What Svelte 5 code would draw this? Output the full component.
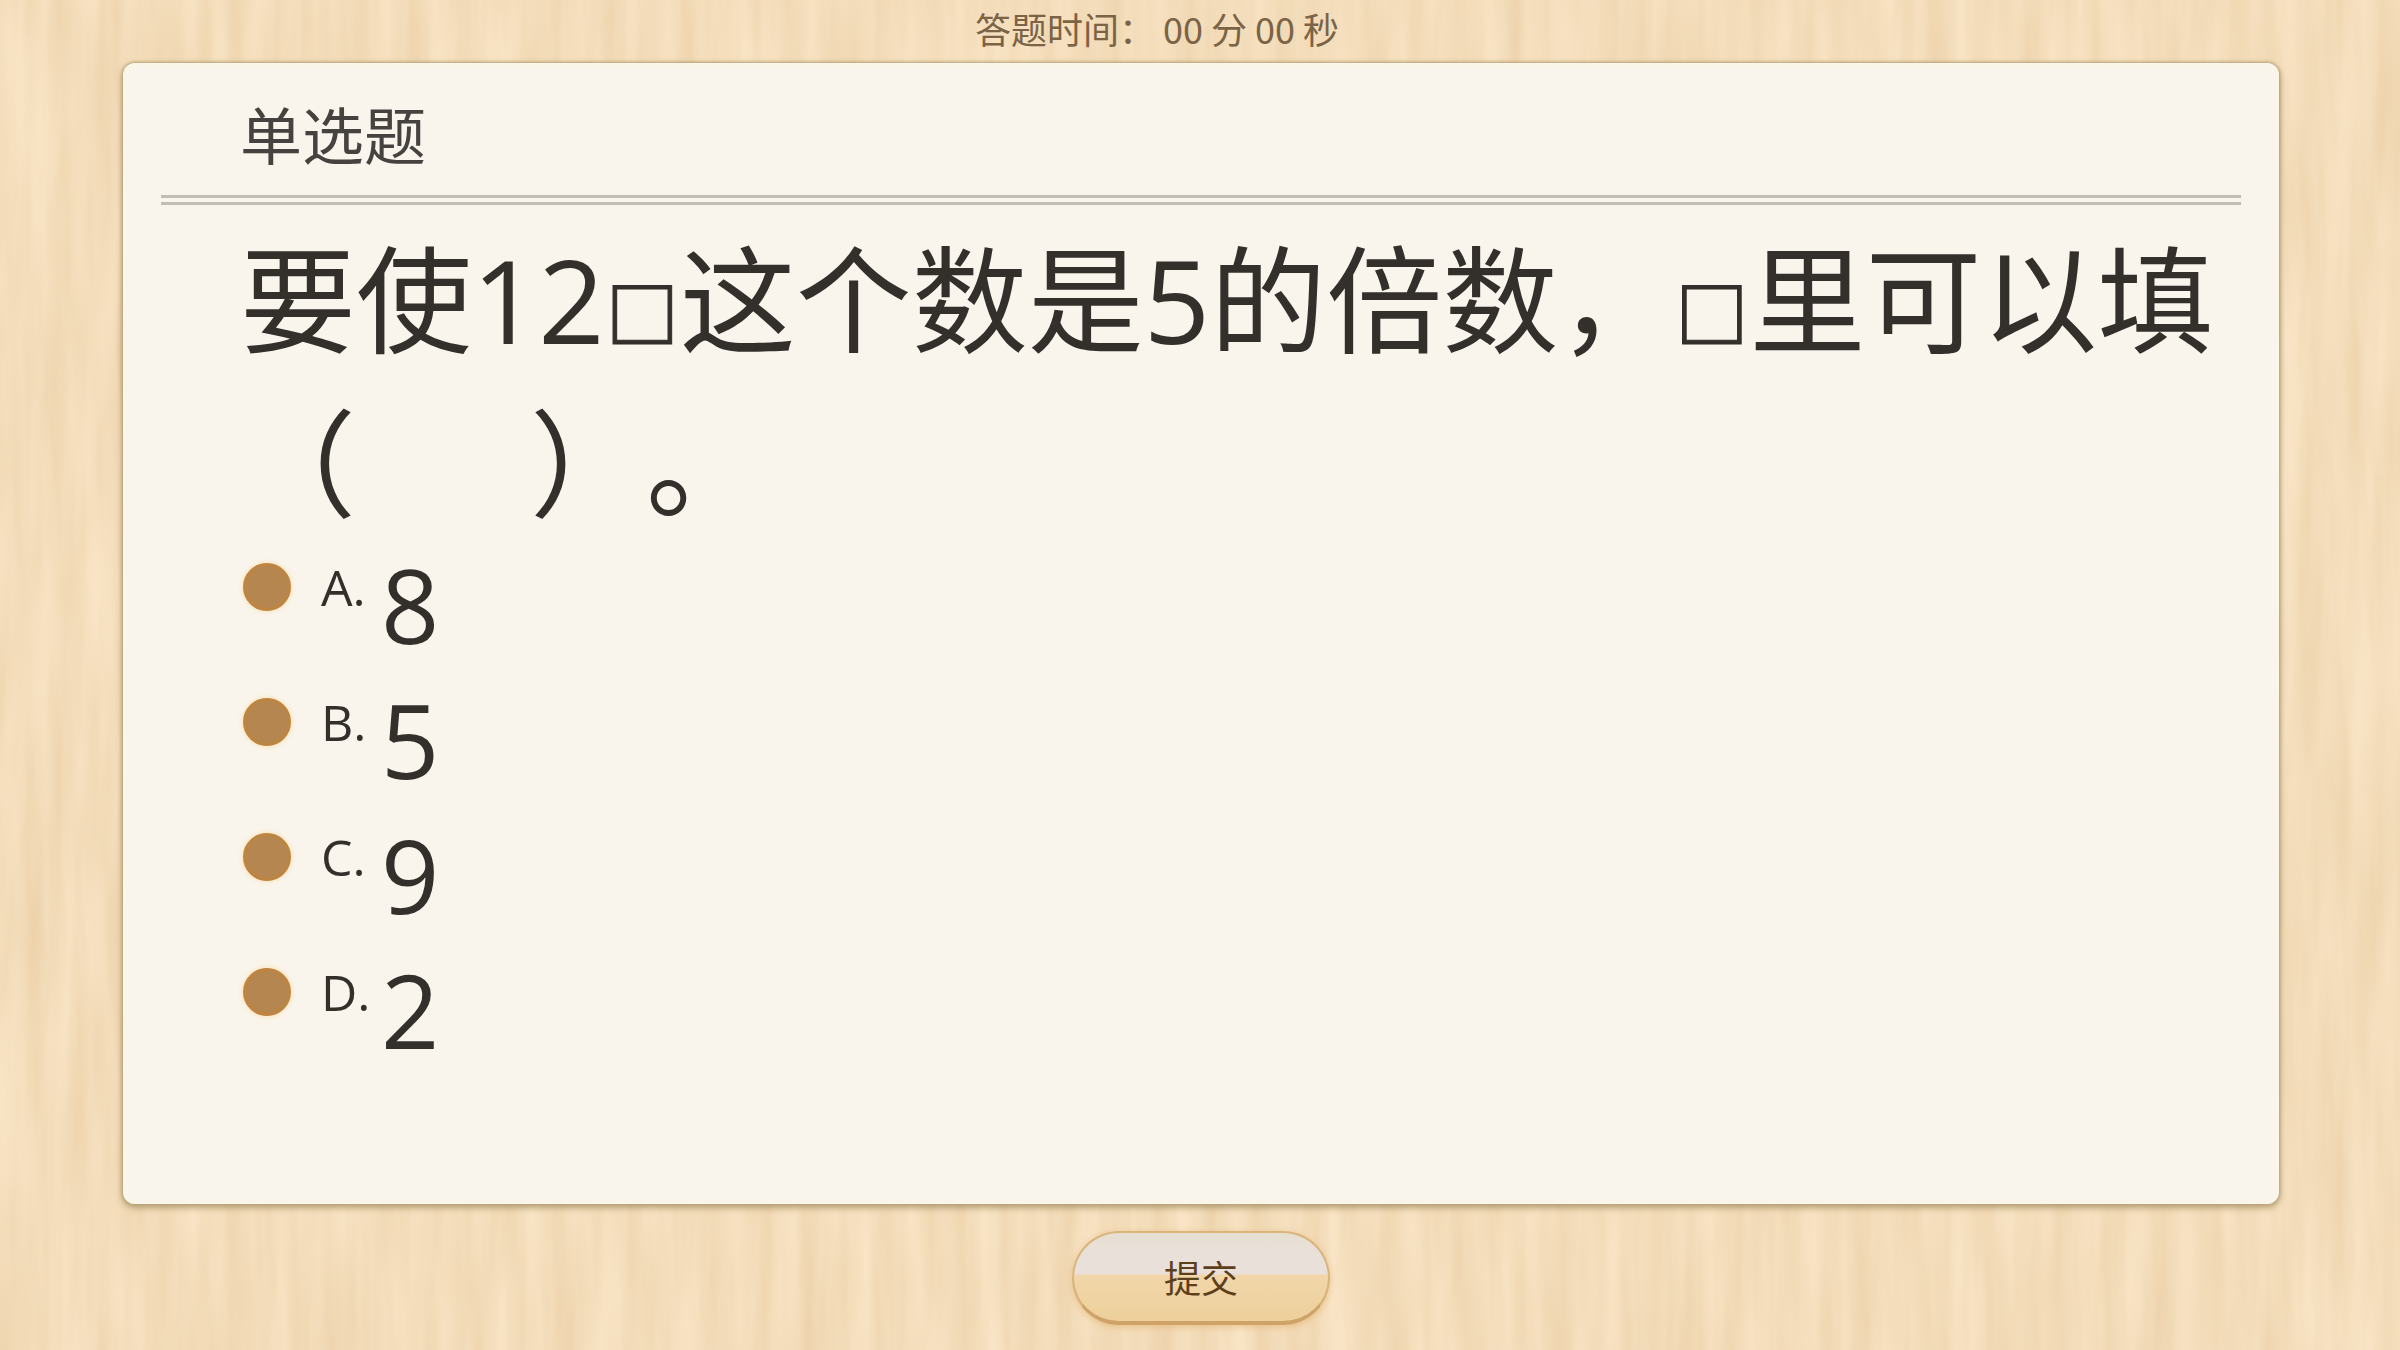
<script lang="ts">
  type Option = { key: string; text: string };

  const options: Option[] = [
    { key: 'A', text: '8' },
    { key: 'B', text: '5' },
    { key: 'C', text: '9' },
    { key: 'D', text: '2' }
  ];

  let selected = $state('');
  let seconds = $state(0);

  const pad = (n: number) => String(n).padStart(2, '0');
  const mm = $derived(pad(Math.floor(seconds / 60)));
  const ss = $derived(pad(seconds % 60));

  function submit(e: Event) {
    e.preventDefault();
    seconds = 0;
  }
</script>

<form class="page" onsubmit={submit}>
  <!-- wood grain -->
  <svg class="wood" aria-hidden="true">
    <filter id="grain" x="0" y="0" width="100%" height="100%" color-interpolation-filters="sRGB">
      <feTurbulence type="fractalNoise" baseFrequency="0.04 0.004" numOctaves="3" seed="8" />
      <feColorMatrix
        values="0.06 0 0 0 0.925
                0.09 0 0 0 0.82
                0.13 0 0 0 0.665
                0 0 0 0 1"
      />
    </filter>
    <rect width="100%" height="100%" filter="url(#grain)" />
  </svg>

  <header class="timer">答题时间： {mm} 分 {ss} 秒</header>

  <main class="panel">
    <h1>单选题</h1>
    <hr />
    <fieldset>
      <legend>
        要使12<span class="box">□</span>这个数是5的倍数，<span class="box">□</span>里可以填（&emsp;&ensp;）。
      </legend>
      {#each options as opt}
        <label class="option">
          <input type="radio" name="answer" value={opt.key} bind:group={selected} />
          <span class="key">{opt.key}.</span>
          <span class="value">{opt.text}</span>
        </label>
      {/each}
    </fieldset>
  </main>

  <footer>
    <button type="submit">提交</button>
  </footer>
</form>

<style>
  :global(body) {
    margin: 0;
  }
  .page {
    position: relative;
    box-sizing: border-box;
    min-height: 100vh;
    display: flex;
    flex-direction: column;
    padding: 0 121px 0 123px;
    background: #f3dcba;
    color: #33302c;
    font-family: 'Noto Sans CJK SC', sans-serif;
    isolation: isolate;
  }
  .wood {
    position: absolute;
    inset: 0;
    width: 100%;
    height: 100%;
    z-index: -1;
  }
  .timer {
    padding: 0 88px 7px 0;
    font-size: 36px;
    line-height: 56px;
    text-align: center;
    color: #7b6346;
  }
  .panel {
    flex: 1;
    box-sizing: border-box;
    padding: 28px 38px;
    border-radius: 12px;
    background: #f9f5ed;
    box-shadow:
      0 0 3px 1px #b9a57c,
      0 3px 6px 1px rgba(130, 105, 55, 0.5),
      inset 0 0 12px #fbf6e6;
  }
  h1 {
    margin: 0;
    padding-left: 79px;
    font-size: 62px;
    font-weight: 400;
    line-height: 84px;
    color: #45423f;
  }
  hr {
    height: 4px;
    margin: 20px 0 0;
    border: solid #c0bdb5;
    border-width: 3px 0;
  }
  fieldset {
    margin: 0;
    padding: 12px 0 0 79px;
    border: 0;
    min-width: 0;
  }
  legend {
    float: left;
    width: 100%;
    padding: 0;
    font-family: 'Open Sans', 'Noto Sans CJK SC', sans-serif;
    font-size: 116px;
    line-height: 164px;
    text-spacing-trim: space-all;
  }
  .box {
    margin: 0 8px;
    font-family: 'Liberation Sans', sans-serif;
    font-size: 98px;
    line-height: 1;
    -webkit-text-stroke: 1px;
  }
  .option {
    clear: both;
    display: flex;
    align-items: flex-start;
    height: 135px;
    font-family: 'Open Sans', sans-serif;
  }
  input {
    appearance: none;
    width: 48px;
    height: 48px;
    margin: 18px 30px 0 3px;
    border: 3px solid #bd8540;
    border-radius: 50%;
    background: #b68650;
    box-shadow: 0 0 5px 1px #fbe3bb;
  }
  input:checked {
    background: #7a4a1c;
  }
  .key {
    width: 60px;
    font-size: 50px;
    line-height: 84px;
  }
  .value {
    font-size: 102px;
    line-height: 120px;
  }
  footer {
    display: flex;
    justify-content: center;
    padding: 27px 0 25px;
  }
  button {
    width: 258px;
    height: 94px;
    padding: 0;
    border: 2px solid #d9b57c;
    border-bottom: 4px solid #cfa267;
    border-radius: 47px;
    background: linear-gradient(#e6dfd0, #eae0da 20%, #eae0da 46%, #f1d6aa 48%, #edd09a);
    box-shadow: 0 2px 6px rgba(225, 175, 105, 0.6);
    font-family: inherit;
    font-size: 37px;
    color: #5d3f1c;
    cursor: pointer;
  }
</style>
